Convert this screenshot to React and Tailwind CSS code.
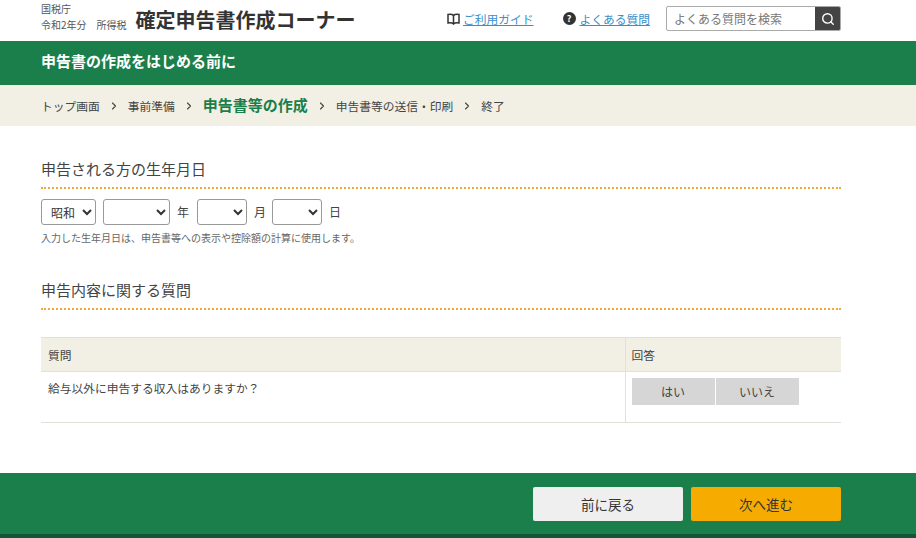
import { ChevronRight, Search } from "lucide-react";

const FONT = { fontFamily: '"Noto Sans CJK JP", "Liberation Sans", sans-serif' };

const STEPS = [
  { label: "トップ画面" },
  { label: "事前準備" },
  { label: "申告書等の作成", current: true },
  { label: "申告書等の送信・印刷" },
  { label: "終了" },
];

function BookIcon() {
  return (
    <svg width="13" height="12" viewBox="0 0 13 12" fill="none" stroke="#333" strokeWidth="1.5">
      <path d="M6.5 2.5C5.5 1.5 3 1.2 1 1.5V10c2-.3 4.500 0 5.500 1 1-1 3.500-1.300 5.500-1V1.500c-2-.3-4.500 0-5.500 1Z" />
      <path d="M6.500 2.500V11" />
    </svg>
  );
}

function HelpIcon() {
  return (
    <span className="flex h-[13px] w-[13px] items-center justify-center rounded-full bg-[#333] text-[9px] font-bold leading-none text-white">
      ?
    </span>
  );
}

function SectionTitle({ children }) {
  return (
    <h2 className="border-b-2 border-dotted border-[#eda93a] pb-[6px] text-[15px] leading-[24px] text-[#444]">
      {children}
    </h2>
  );
}

function DateSelect({ className, value }) {
  return (
    <select
      defaultValue={value}
      className={`h-[26px] rounded-[3px] border border-[#999] bg-white pl-[5px] text-[12px] text-[#333] ${className}`}
    >
      <option value="">{""}</option>
      <option value="昭和">昭和</option>
    </select>
  );
}

export default function App() {
  return (
    <div className="flex h-[538px] w-[916px] flex-col overflow-hidden bg-white text-[#444]" style={FONT}>
      {/* ヘッダー */}
      <header className="flex h-[41px] items-center justify-between pb-[4px] pl-[41px] pr-[75px]">
        <div className="flex items-center gap-[9px]">
          <div className="-mt-[3px] text-[10px] leading-[16px] text-[#555]">
            <div>国税庁</div>
            <div>令和2年分　所得税</div>
          </div>
          <div className="mt-[3px] text-[20px] font-bold leading-none text-[#333]">確定申告書作成コーナー</div>
        </div>
        <div className="flex items-center">
          <BookIcon />
          <a className="ml-[3px] text-[11.75px] text-[#3a8fc9] underline">ご利用ガイド</a>
          <span className="ml-[29px]">
            <HelpIcon />
          </span>
          <a className="ml-[4px] text-[11.75px] text-[#3a8fc9] underline">よくある質問</a>
          <div className="ml-[16px] flex h-[25px] w-[175px] overflow-hidden rounded-[2px] border border-[#aaa]">
            <input
              placeholder="よくある質問を検索"
              className="min-w-0 flex-1 px-[7px] text-[12px] outline-none placeholder:text-[#777]"
            />
            <div className="flex w-[25px] items-center justify-center bg-[#444]">
              <Search size={14} color="#fff" strokeWidth={2.4} />
            </div>
          </div>
        </div>
      </header>

      <div className="flex h-[44px] items-center bg-[#1a7f4b] pb-[3px] pl-[41px] text-[15px] font-bold text-white">
        申告書の作成をはじめる前に
      </div>

      {/* ステップ */}
      <nav className="flex h-[41px] items-center bg-[#f2efe4] pl-[41px]">
        {STEPS.map((s, i) => (
          <div key={s.label} className="flex items-center">
            {i > 0 && <ChevronRight size={12} color="#444" strokeWidth={2.2} className="mx-[8px]" />}
            <span
              className={
                s.current
                  ? "text-[15px] font-bold text-[#1a7f4b]"
                  : "text-[11.75px] text-[#444]"
              }
            >
              {s.label}
            </span>
          </div>
        ))}
      </nav>

      <main className="flex-1 pl-[41px] pr-[75px] pt-[31px]">
        <SectionTitle>申告される方の生年月日</SectionTitle>
        <div className="mt-[10px] flex items-center text-[12px]">
          <DateSelect className="w-[55px]" value="昭和" />
          <DateSelect className="ml-[7px] w-[67px]" value="" />
          <span className="ml-[7px] mr-[8px]">年</span>
          <DateSelect className="w-[50px]" value="" />
          <span className="ml-[7px] mr-[6px]">月</span>
          <DateSelect className="w-[50px]" value="" />
          <span className="ml-[7px]">日</span>
        </div>
        <p className="mt-[5px] text-[10px] leading-[16px] text-[#666]">
          入力した生年月日は、申告書等への表示や控除額の計算に使用します。
        </p>

        <div className="mt-[32px]">
          <SectionTitle>申告内容に関する質問</SectionTitle>
        </div>

        <table className="mt-[27px] w-full border-collapse text-[11.75px]">
          <thead>
            <tr className="h-[34px] border-y border-[#e2e0d8] bg-[#f2efe4] text-left">
              <th className="px-[7px] font-normal">質問</th>
              <th className="w-[216px] border-l border-[#e2e0d8] px-[6px] font-normal">回答</th>
            </tr>
          </thead>
          <tbody>
            <tr className="h-[51px] border-b border-[#e2e0d8] align-top">
              <td className="px-[7px] pt-[7px]">給与以外に申告する収入はありますか？</td>
              <td className="border-l border-[#e2e0d8] px-[6px] pt-[6px]">
                <div className="flex gap-px">
                  <button className="h-[27px] w-[83px] bg-[#d6d6d6] text-[12px] text-[#444]">はい</button>
                  <button className="h-[27px] w-[83px] bg-[#d6d6d6] text-[12px] text-[#444]">いいえ</button>
                </div>
              </td>
            </tr>
          </tbody>
        </table>
      </main>

      {/* フッター */}
      <footer className="flex h-[65px] items-start justify-end gap-[8px] border-b-[4px] border-[#10563a] bg-[#1a7f4b] pr-[75px] pt-[14px]">
        <button className="h-[34px] w-[150px] rounded-[2px] bg-[#efefef] text-[13.5px] text-[#333]">前に戻る</button>
        <button className="h-[34px] w-[150px] rounded-[2px] bg-[#f5ab00] text-[13.5px] text-[#333]">次へ進む</button>
      </footer>
    </div>
  );
}
